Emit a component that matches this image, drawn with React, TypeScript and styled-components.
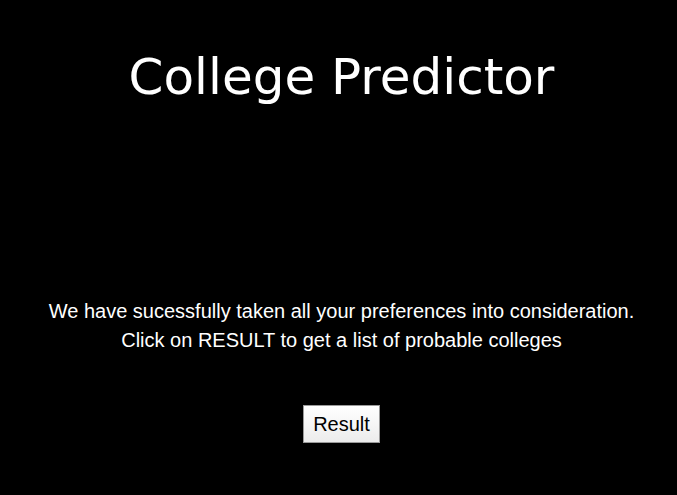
import React from "react";
import styled, { createGlobalStyle } from "styled-components";

const Global = createGlobalStyle`
  html, body { margin: 0; padding: 0; background: #000; }
  body { font-family: "Liberation Sans", Arial, sans-serif; }
`;

const Page = styled.div`
  width: 677px;
  height: 495px;
  box-sizing: border-box;
  padding-left: 6px;
  background: #000;
  color: #fff;
  display: flex;
  flex-direction: column;
  align-items: center;
`;

const Title = styled.h1`
  margin: 48px 0 0;
  font-family: "DejaVu Sans", Verdana, sans-serif;
  font-weight: normal;
  font-size: 50px;
  line-height: 58px;
`;

const Message = styled.p`
  margin: 191px 0 0;
  text-align: center;
  font-size: 20px;
  line-height: 29px;
`;

const ResultButton = styled.button`
  margin-top: 50px;
  height: 38px;
  padding: 0 9px;
  font-family: "Liberation Sans", Arial, sans-serif;
  font-size: 20px;
  color: #000;
  background: linear-gradient(#fff, #ececec);
  border: 1px solid #9a9a9a;
  border-radius: 0;
`;

export default function App() {
  return (
    <>
      <Global />
      <Page>
        <Title>College Predictor</Title>
        <Message>
          We have sucessfully taken all your preferences into consideration.
          <br />
          Click on RESULT to get a list of probable colleges
        </Message>
        <ResultButton>Result</ResultButton>
      </Page>
    </>
  );
}
